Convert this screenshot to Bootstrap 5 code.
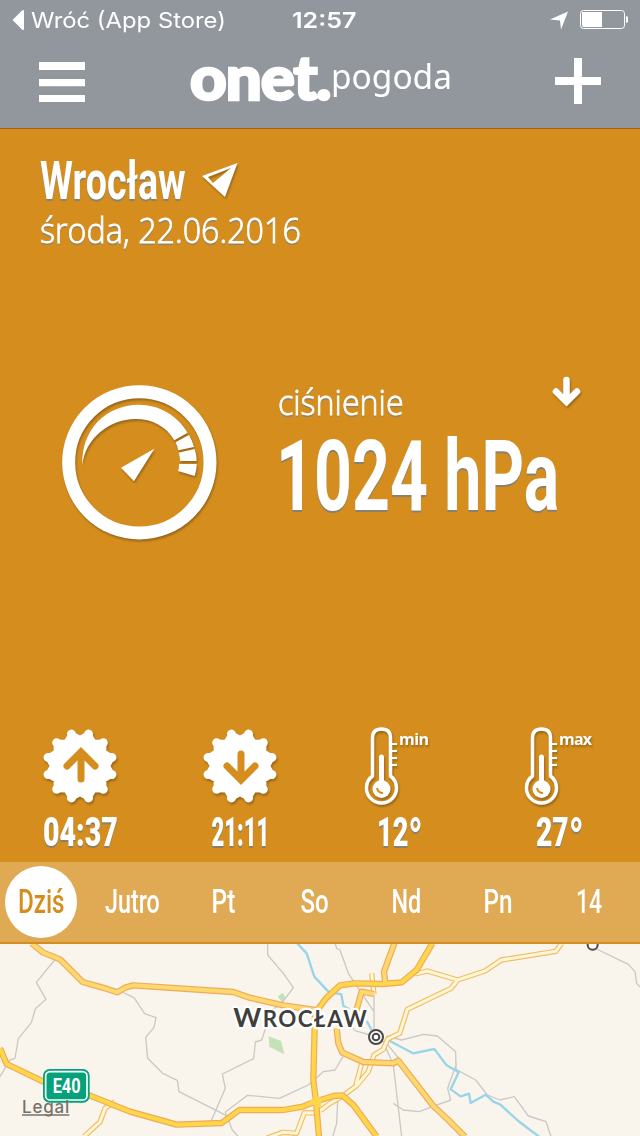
<!DOCTYPE html>
<html lang="pl">
<head>
    <meta charset="UTF-8">
    <meta name="viewport" content="width=device-width, initial-scale=1.0">
    <title>Onet Pogoda</title>
    <link href="https://cdn.jsdelivr.net/npm/bootstrap@5.3.0/dist/css/bootstrap.min.css" rel="stylesheet">
    <style>
        body {
            width: 640px;
            height: 1136px;
            background: #d58e1e;
            font-family: "Open Sans", "Noto Sans", sans-serif;
            line-height: 1;
        }
        svg {
            display: block;
            flex: none;
        }
        .app-header {
            background: #92979e;
            border-bottom: 1px solid #a3620f;
        }
        .status-bar {
            height: 40px;
            padding: 0 12px 0 12px;
            font: 400 22px/40px Inter, sans-serif;
        }
        .status-left {
            width: 280px;
        }
        .top-nav {
            height: 88px;
            padding: 0 39px;
        }
        .brand-name {
            height: 66px;
            margin-left: 105px;
        }
        .brand-main {
            width: 141px;
            padding-top: 4px;
            font: 900 60px/67px Lato, sans-serif;
            letter-spacing: -1px;
            -webkit-text-stroke: 2.5px #fff;
        }
        .brand-sub {
            font: 400 34px/34px "Noto Sans", sans-serif;
            margin-top: 19px;
            width: 120px;
        }
        /* text squeezed to the width given in data-fit */
        .fit {
            display: inline-block;
            white-space: nowrap;
            transform-origin: left center;
        }
        .fit-center {
            transform-origin: center;
        }
        .condensed {
            font-family: Roboto, sans-serif;
        }
        .raised {
            text-shadow: 0 2px 1px #85806f;
        }
        .lifted {
            filter: drop-shadow(1px 2px 1px rgba(110, 75, 25, .6));
        }
        .weather {
            height: 733px;
        }
        .place {
            padding: 26px 40px 0;
        }
        .place-name {
            width: 162px;
            height: 53px;
            font-size: 53px;
            font-weight: 700;
        }
        .place-date {
            margin-top: 5px;
            font-size: 34px;
            font-weight: 300;
            -webkit-text-stroke: .8px #fff;
        }
        .pressure {
            margin-top: 123px;
            padding-left: 50px;
        }
        .pressure-text {
            width: 303px;
            margin-left: 48px;
            padding-top: 6px;
        }
        .pressure-label {
            margin-top: 9px;
            font-size: 34px;
            font-weight: 300;
            -webkit-text-stroke: .8px #fff;
        }
        .pressure-value {
            margin: 9px 0 0 -2px;
            font-size: 98px;
            font-weight: 700;
        }
        .stats {
            padding-bottom: 9px;
        }
        .stat-value {
            height: 40px;
            margin-top: 5px;
            font-size: 40px;
            font-weight: 900;
        }
        .degree {
            font-size: 54px;
            line-height: 0;
            vertical-align: -10px;
        }
        .days {
            height: 82px;
            background: #e0aa54;
            border-bottom: 2px solid #d58e1e;
            margin: 0;
            overflow: hidden;
        }
        .days .nav-item {
            width: 91.3px;
        }
        .days .nav-item:first-child {
            margin-left: -4.5px;
        }
        .days .nav-link {
            width: 72px;
            height: 72px;
            padding: 0;
            font-size: 33.5px;
            font-weight: 500;
            color: #fff;
        }
        .days .nav-link.active {
            color: #d58e1e;
            background: #fff;
        }
    </style>
</head>
<body class="m-0 overflow-hidden text-white">
    <header class="app-header">
        <div class="status-bar d-flex align-items-center">
            <div class="status-left d-flex align-items-center">
                <svg width="19" height="22" viewBox="0 0 19 22"><path d="M.5 11 10 1.500q2-1.500 2 .8v17.400q0 2.300-2 .8z" fill="#fff"/></svg>
                <span class="fit" data-fit="195">Wróć (App Store)</span>
            </div>
            <span class="fit fw-semibold" data-fit="65">12:57</span>
            <svg class="ms-auto" width="78" height="22" viewBox="0 0 78 22">
                <path d="M0 10.500 18 2.500 11 20.500 10 11.500z" fill="#fff"/>
                <rect x="30.500" y="1.500" width="44" height="18" rx="3" fill="none" stroke="#fff"/>
                <path d="M32 3h20v15H34q-2 0-2-2zM76 7q3 1 3 3.500T76 14z" fill="#fff"/>
            </svg>
        </div>
        <nav class="top-nav d-flex align-items-start">
            <svg class="mt-3" width="46" height="52" viewBox="0 0 46 52"><path d="M0 6h46v8H0zM0 23h46v7.300H0zM0 39h46v7H0z" fill="#fff"/></svg>
            <div class="brand-name d-flex">
                <div class="brand-main"><span class="fit" data-fit="140">onet.</span></div>
                <div class="brand-sub"><span class="fit" data-fit="121">pogoda</span></div>
            </div>
            <svg class="ms-auto mt-3" width="46" height="52" viewBox="0 0 46 52"><path d="M19 2h8v19h19v8H27v19h-8V29H0v-8h19z" fill="#fff"/></svg>
        </nav>
    </header>

    <main class="weather d-flex flex-column">
        <section class="place">
            <div class="d-flex">
                <div class="place-name condensed"><span class="fit raised" data-fit="146">Wrocław</span></div>
                <svg class="lifted" width="38" height="44" viewBox="0 0 38 44"><path fill-rule="evenodd" d="M0 21 35.500 8 23 42zM6 22l5 6L29 13z" fill="#fff"/></svg>
            </div>
            <div class="place-date"><span class="fit raised" data-fit="261">środa, 22.06.2016</span></div>
        </section>

        <section class="pressure d-flex">
            <!-- barometer dial -->
            <svg class="lifted" width="180" height="180" viewBox="0 0 540 540">
                <circle cx="268" cy="277" r="212" fill="none" stroke="#fff" stroke-width="39"/>
                <g fill="#fff">
                    <path d="M97 288C92 180 167 105 266 104C330 104 382 137 413 188L373 211C349 169 307 147 256 147C178 147 103 207 97 288z"/>
                    <path d="M377 217 417 195Q427 212 432 231L385 241Q382 228 377 217z"/>
                    <path d="M386 248 434 237Q440 254 440 273H390Q390 260 386 248z"/>
                    <path d="M387 282H440Q440 301 434 318L384 303Q388 293 387 282z"/>
                    <path d="M213 293 313 236 252 334z"/>
                </g>
            </svg>
            <div class="pressure-text">
                <div class="d-flex justify-content-between">
                    <div class="pressure-label"><span class="fit raised" data-fit="126">ciśnienie</span></div>
                    <svg class="lifted" width="29" height="32" viewBox="0 0 29 32"><path d="M14.500 4v21M4 15.500l10.500 10.500L25 15.500" fill="none" stroke="#fff" stroke-width="6.500" stroke-linecap="round"/></svg>
                </div>
                <div class="pressure-value condensed"><span class="fit raised" data-fit="283">1024 hPa</span></div>
            </div>
        </section>

        <section class="stats row g-0 mt-auto text-center">
            <div class="col-3">
                <svg class="lifted" width="160" height="84" viewBox="-80 -42 160 84">
                    <g stroke="#fff">
                        <path d="M28 0 32.800 8.800 24.200 14 24 24 14 24.200 8.800 32.800 0 28-8.800 32.800-14 24.200-24 24-24.200 14-32.800 8.800-28 0-32.800-8.800-24.200-14-24-24-14-24.200-8.800-32.800 0-28 8.800-32.800 14-24.200 24-24 24.200-14 32.800-8.800z" fill="#fff" stroke-width="4.500" stroke-linejoin="round"/>
                        <path d="M-31.900-8.500 31.900 8.500M-31.900 8.500 31.900-8.500M-23.300-23.300 23.300 23.300M-23.300 23.300 23.300-23.300M-8.500-31.900 8.500 31.900M-8.500 31.900 8.500-31.900" stroke-width="9" stroke-linecap="round"/>
                    </g>
                    <path d="M1 13V-13M-13 0 1-14 15 0" fill="none" stroke="#d58e1e" stroke-width="7" stroke-linecap="round"/>
                </svg>
                <div class="stat-value condensed"><span class="fit fit-center raised" data-fit="75">04:37</span></div>
            </div>
            <div class="col-3">
                <svg class="lifted" width="160" height="84" viewBox="-80 -42 160 84">
                    <g stroke="#fff">
                        <path d="M28 0 32.800 8.800 24.200 14 24 24 14 24.200 8.800 32.800 0 28-8.800 32.800-14 24.200-24 24-24.200 14-32.800 8.800-28 0-32.800-8.800-24.200-14-24-24-14-24.200-8.800-32.800 0-28 8.800-32.800 14-24.200 24-24 24.200-14 32.800-8.800z" fill="#fff" stroke-width="4.500" stroke-linejoin="round"/>
                        <path d="M-31.900-8.500 31.900 8.500M-31.900 8.500 31.900-8.500M-23.300-23.300 23.300 23.300M-23.300 23.300 23.300-23.300M-8.500-31.900 8.500 31.900M-8.500 31.900 8.500-31.900" stroke-width="9" stroke-linecap="round"/>
                    </g>
                    <path d="M1-12V13M-13 0 1 14 15 0" fill="none" stroke="#d58e1e" stroke-width="7" stroke-linecap="round"/>
                </svg>
                <div class="stat-value condensed"><span class="fit fit-center raised" data-fit="58">21:11</span></div>
            </div>
            <div class="col-3">
                <svg class="lifted" width="160" height="84" viewBox="0 0 160 84">
                    <path d="M52.500 52V14q0-9 9-9t9 9v38a15 15 0 1 1-18 0z" fill="none" stroke="#fff" stroke-width="3.500"/>
                    <path d="M71 20h6M71 27h6M71 34h6M71 41h6" stroke="#fff" stroke-width="2.200"/>
                    <path d="M61.500 33v30" stroke="#fff" stroke-width="5" stroke-linecap="round"/>
                    <circle cx="61.500" cy="65" r="9" fill="#fff"/>
                    <path d="M57 64q1 5 6 5" fill="none" stroke="#d58e1e" stroke-width="2"/>
                    <text x="79" y="21" textLength="30" font-size="16" font-weight="700" fill="#fff">min</text>
                </svg>
                <div class="stat-value condensed"><span class="fit fit-center raised" data-fit="46">12<span class="degree">°</span></span></div>
            </div>
            <div class="col-3">
                <svg class="lifted" width="160" height="84" viewBox="0 0 160 84">
                    <path d="M52.500 52V14q0-9 9-9t9 9v38a15 15 0 1 1-18 0z" fill="none" stroke="#fff" stroke-width="3.500"/>
                    <path d="M71 20h6M71 27h6M71 34h6M71 41h6" stroke="#fff" stroke-width="2.200"/>
                    <path d="M61.500 33v30" stroke="#fff" stroke-width="5" stroke-linecap="round"/>
                    <circle cx="61.500" cy="65" r="9" fill="#fff"/>
                    <path d="M57 64q1 5 6 5" fill="none" stroke="#d58e1e" stroke-width="2"/>
                    <text x="79" y="21" textLength="33" font-size="16" font-weight="700" fill="#fff">max</text>
                </svg>
                <div class="stat-value condensed"><span class="fit fit-center raised" data-fit="48">27<span class="degree">°</span></span></div>
            </div>
        </section>
    </main>

    <ul class="days nav flex-nowrap align-items-center condensed" id="days"></ul>

    <!-- map, three units per pixel -->
    <svg width="640" height="192" viewBox="0 12 1920 576" fill="none" stroke-linejoin="round">
        <path fill="#f9f4ec" d="M0 0h1920v600H0z"/>
        <path fill="#c4e2b8" d="M806 289 843 303 853 343 808 320zM833 170l14-12 9 14-9 15z"/>
        <g stroke="#cbc9c5" stroke-width="4">
            <path d="M164 60 109 127 138 178 106 206 94 248 55 296 45 355 30 360 0 410"/>
            <path d="M370 158 402 173 434 221 468 233 462 262 437 292 443 355 488 400 532 421 537 455 680 527 697 570 715 590"/>
            <path d="M803 10V45L850 100 880 143 845 190 815 210 785 300 766 306 761 356 667 402 676 445 634 542"/>
            <path d="M677 528V515L743 466 838 475 925 435 970 395 1005 390 1035 340"/>
            <path d="M1005 10 1010 25 1020 30 1045 100 1122 215M1122 150V280M1030 230 1065 272 1110 285 1150 305 1180 375 1205 590"/>
            <path d="M1160 288 1205 300 1270 283 1312 288 1367 335 1368 388 1427 420 1462 465 1500 480 1543 470 1585 528 1638 545 1653 590M1180 490 1210 510 1257 515 1352 480 1343 445 1370 370M1013 480 1010 550 998 590"/>
            <path d="M1790 27 1885 73 1905 95 1910 130 1920 141M1160 310 1200 360"/>
        </g>
        <g stroke="#98d5e8" stroke-width="7">
            <path d="M892 10 920 40 943 110 985 155 1024 163 1030 198 1048 208M1100 243 1115 270M1168 302 1239 340 1303 327 1340 376 1376 397 1352 448 1382 469 1407 461 1412 489 1457 464 1480 485 1500 493 1555 543 1617 590"/>
        </g>
        <path d="M1245 102 1282 93 1373 120 1455 93 1504 60 1667 34 1685 10M1373 120 1353 145 1222 208 1199 280 1163 297 1150 328 1122 345 1105 395 1070 437 1030 467 990 490 960 512M1085 370 1068 435M252 590 300 546 315 505 345 485M800 595 848 577 890 580 913 518 945 519M1115 100 1122 162" stroke="#f0bd68" stroke-width="16"/>
        <path d="M1245 102 1282 93 1373 120 1455 93 1504 60 1667 34 1685 10M1373 120 1353 145 1222 208 1199 280 1163 297 1150 328 1122 345 1105 395 1070 437 1030 467 990 490 960 512M1085 370 1068 435M252 590 300 546 315 505 345 485M800 595 848 577 890 580 913 518 945 519M1115 100 1122 162" stroke="#fff6d5" stroke-width="9"/>
        <g stroke="#f0aa58" stroke-width="19">
            <path d="M95 10 130 38 180 58 248 126 305 142 352 157 375 143 400 136 700 156 745 172 850 196 960 212M1183 10 1152 95 1156 130M1122 162 1085 155 1068 215M1010 265 1015 310 1027 338 1090 366 1180 370 1195 362 1300 498 1345 540 1395 590"/>
            <path d="M0 325 20 372 130 425 240 455 390 515 530 554 665 549 718 510 850 510 908 500 945 485 1000 468 1027 466 1060 495 1130 590M1297 10 1250 90 1205 127 1150 132 1063 130 1020 136 978 175 945 220 940 420 948 485 957 590"/>
        </g>
        <path d="M95 10 130 38 180 58 248 126 305 142 352 157 375 143 400 136 700 156 745 172 850 196 960 212M1183 10 1152 95 1156 130M1122 162 1085 155 1068 215M1010 265 1015 310 1027 338 1090 366 1180 370 1195 362 1300 498 1345 540 1395 590" stroke="#fcd870" stroke-width="12"/>
        <path d="M0 325 20 372 130 425 240 455 390 515 530 554 665 549 718 510 850 510 908 500 945 485 1000 468 1027 466 1060 495 1130 590M1297 10 1250 90 1205 127 1150 132 1063 130 1020 136 978 175 945 220 940 420 948 485 957 590" stroke="#fdd649" stroke-width="12"/>
        <path d="M925 488 948 468 966 475 962 505z" fill="#fdd649"/>
        <g stroke="#4b4845" stroke-width="6" fill="#fff">
            <circle cx="1778" cy="14" r="15"/>
            <circle cx="1128" cy="291" r="21"/>
            <circle cx="1128" cy="291" r="10"/>
        </g>
        <text x="700" y="261" textLength="400" font-family="Lato" font-weight="700" font-size="67" fill="#403f3e" stroke="#fff" stroke-width="14" paint-order="stroke"><tspan font-size="80">W</tspan>ROCŁAW</text>
        <rect x="129" y="387" width="140" height="101" rx="20" fill="#06a07a"/>
        <rect x="137" y="395" width="124" height="85" rx="13" stroke="#fff" stroke-width="5"/>
        <text x="158" y="458" textLength="84" lengthAdjust="spacingAndGlyphs" font-family="Roboto" font-weight="700" font-size="58" fill="#fff">E40</text>
        <text x="66" y="519" textLength="142" font-family="Inter" font-weight="500" font-size="51" fill="#77726c">Legal</text>
        <path d="M66 525h142" stroke="#77726c" stroke-width="4"/>
    </svg>

    <script src="https://cdn.jsdelivr.net/npm/bootstrap@5.3.0/dist/js/bootstrap.bundle.min.js"></script>
    <script>
        const days = [['Dziś', 47], ['Jutro', 55], ['Pt', 24], ['So', 28], ['Nd', 30], ['Pn', 29], ['14', 26]];

        document.getElementById('days').innerHTML = days.map(([name, width], index) => `
            <li class="nav-item d-flex justify-content-center">
                <a class="nav-link rounded-circle d-flex align-items-center justify-content-center ${index === 0 ? 'active' : ''}" href="#">
                    <span class="fit fit-center" data-fit="${width}">${name}</span>
                </a>
            </li>
        `).join('');

        // Squeeze each label to its width and give the freed space back to the layout
        document.querySelectorAll('.fit').forEach(el => {
            const natural = el.offsetWidth;
            const extra = el.dataset.fit - natural;
            el.style.transform = `scaleX(${el.dataset.fit / natural})`;
            if (el.classList.contains('fit-center')) {
                el.style.margin = `0 ${extra / 2}px`;
            } else {
                el.style.marginRight = `${extra}px`;
            }
        });
    </script>
</body>
</html>
